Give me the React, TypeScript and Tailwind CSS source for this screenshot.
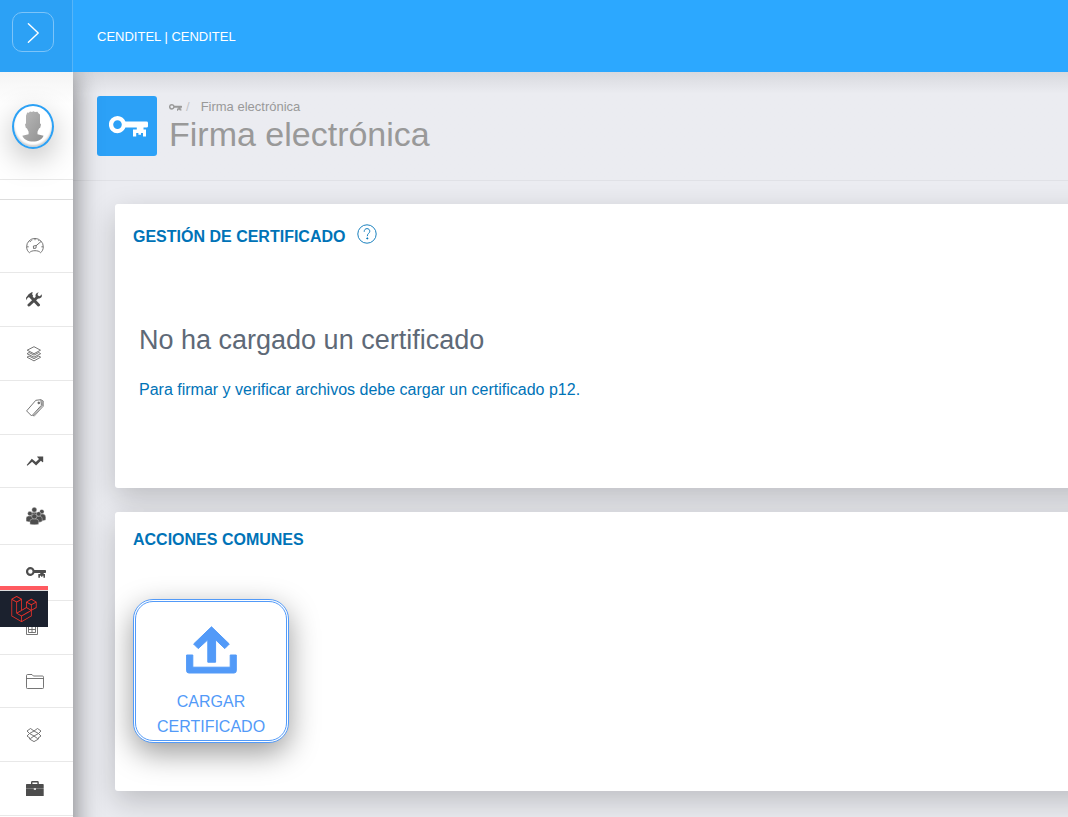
import type { ReactNode } from "react";
import { SiLaravel } from "react-icons/si";

function KeyIcon({ className }: { className: string }) {
  return (
    <svg viewBox="0 0 39 21" className={className} fill="currentColor" aria-hidden="true">
      <path
        fillRule="evenodd"
        d="M8.5 0C12 0 15 2.2 16.5 5.6H37.5Q39 5.6 39 7V10.2Q39 11.6 37.5 11.6H34.5V13.4H37V20.5H34V17H32V18.8H29.4V17H27.2V20.5H24V13.4H27.8V11.6H16.4C15 15 12 17.2 8.5 17.2A8.6 8.6 0 0 1 8.5 0ZM8.5 4.3A4.3 4.3 0 1 0 8.5 12.9A4.3 4.3 0 1 0 8.5 4.3Z"
      />
    </svg>
  );
}

function ThinIcon({ className = "h-[18px] w-[18px]", viewBox = "0 0 18 18", children }: { className?: string; viewBox?: string; children: ReactNode }) {
  return (
    <svg viewBox={viewBox} className={className} fill="none" stroke="#666" strokeWidth=".9" strokeLinejoin="round" aria-hidden="true">
      {children}
    </svg>
  );
}

function GaugeIcon() {
  return (
    <ThinIcon>
      <path d="M3.4 15.7C1.7 14.5.6 12.3.6 9.8A8.3 8.3 0 0 1 17.3 9.8C17.3 12.3 16.2 14.5 14.6 15.7C13.3 14.2 11.3 13.7 9 13.7S4.7 14.2 3.4 15.7Z" />
      <path d="M7.4 9 10.2 8.5 10 11.1 7.5 11.5ZM10 8.8 15 4.5M9 1.5V3.2M3.8 4 4.8 5M1 9.8H2.7M15.4 9.8H17M13 3.1 12.4 4.1M5.4 2.9 5.8 3.8" />
    </ThinIcon>
  );
}

function LayersIcon() {
  return (
    <ThinIcon className="size-4" viewBox="0 0 16 16">
      <path d="M8 .7 14.5 4.2 8 7.7 1.2 4.2Z" />
      <path d="M3 6.5 1 7.7 8 11.1 14.7 7.7 12.8 6.5 8 9.1Z" />
      <path d="M3 10 1 11.2 8 14.9 14.7 11.2 12.8 10 8 12.6Z" />
    </ThinIcon>
  );
}

function TagsIcon() {
  return (
    <ThinIcon>
      <path d="M9.8 1.3 14.9.7 15.4 6.3 5.7 17 .6 11.9Z" />
      <path d="M14.9.7 17.3 2V7.2L8.2 17.2 6.9 16.1M16.2 1.5 16.4 6.8 7.3 16.7" strokeWidth=".7" />
      <circle cx="12.8" cy="3.9" r=".9" fill="#555" />
    </ThinIcon>
  );
}

function LedgerIcon() {
  return (
    <ThinIcon className="h-[14px] w-3" viewBox="0 0 12 14">
      <path d="M.5 1.5H11.5V13.5H.5ZM.5 4.5H11.5" />
      <path d="M2.5 5.5V11.5H9.5V5.5M6 5.5V11.5M2.5 8.5H9.5" />
    </ThinIcon>
  );
}

function FolderIcon() {
  return (
    <ThinIcon className="h-4 w-[18px]" viewBox="0 0 18 16">
      <path d="M.5 14.7V2.7Q.5 1.5 1.6 1.5H6L7.4 3H16.4Q17.5 3 17.5 4.2V14.7Q17.5 15.5 16.7 15.5H1.3Q.5 15.5.5 14.7ZM.5 5.5H17.5" />
    </ThinIcon>
  );
}

function BoxIcon() {
  return (
    <ThinIcon className="size-4" viewBox="0 0 16 16">
      <path d="M4.5 1.5 8 4 11.5 1.5 15 4 12.5 6.5 15 9 11.5 11.5 8 9 4.5 11.5 1 9 3.5 6.5 1 4ZM8 4 3.5 6.5 8 9 12.5 6.5Z" />
      <path d="M3.5 11.2V12L8 14.6 12.5 12V11.2" />
    </ThinIcon>
  );
}

function ToolsIcon() {
  return (
    <svg viewBox="0 0 16 15" className="h-[15px] w-4" fill="none" stroke="currentColor" aria-hidden="true">
      <path d="M5 5 12.5 13" strokeWidth="3" strokeLinecap="round" />
      <path d="M3 13 11.6 5" strokeWidth="3" strokeLinecap="round" />
      <path d="M12.7.3C10 .8 8.9 3.1 9.8 5.1 11.2 7.2 14.5 6.8 15.8 4.4L15.8 2.3 13.8 4.3 11.9 3.7 11.6 1.9Z" fill="currentColor" stroke="none" />
      <path d="M.3 8.3 0 5.8 2.6 2.3 5.6.2 7 .6 6 1.9 7.2 4 4.6 6.3 3 5.1 1.5 6.1Z" fill="currentColor" stroke="none" />
    </svg>
  );
}

function TrendIcon() {
  return (
    <svg viewBox="0 0 18 10" className="h-2.5 w-[18px]" fill="currentColor" aria-hidden="true">
      <path d="M.7 9 5.8 2.7 9.8 6 13 2.9 11.2 1V.4H17.2V6L16.6 6.2 14.9 4.7 10.1 9.4 6.1 5.7 1.4 9.8Z" />
    </svg>
  );
}

function GroupIcon() {
  return (
    <svg viewBox="0 0 20 18" className="h-[18px] w-5" fill="currentColor" stroke="#fff" strokeWidth=".35" aria-hidden="true">
      <circle cx="8.3" cy="2.8" r="2.5" />
      <path d="M4.5 11V7.6Q4.5 5.3 6.8 5.3H10Q12.2 5.3 12.2 7.6V11Z" />
      <circle cx="15.8" cy="4.7" r="2.3" />
      <path d="M12.5 14V9.1Q12.5 7 15 7H17Q19.8 7.3 19.8 10.2V13Q17 14.2 12.5 14Z" />
      <circle cx="3.9" cy="6.6" r="2.3" />
      <path d="M.1 14.3V11.1Q.2 9 2.5 9H5Q7.2 9 7.2 11.1V14.8Q3 15.6.1 14.3Z" />
      <circle cx="12.7" cy="7" r="2.3" />
      <path d="M9.5 15V11.5Q9.5 9.3 11.5 9.3H14Q16.2 9.4 16.2 11.8V14.5Q13 16 9.5 15Z" />
      <circle cx="8.3" cy="9.5" r="2.6" />
      <path d="M3.9 17.2V14.4Q3.9 12.1 6.4 12.1H10.2Q12.7 12.1 12.7 14.4V17.2Q8.5 18.4 3.9 17.2Z" />
    </svg>
  );
}

function BriefcaseIcon() {
  return (
    <svg viewBox="0 0 18 15" className="h-[15px] w-[18px]" fill="currentColor" aria-hidden="true">
      <path fillRule="evenodd" d="M5 3V1.4Q5 0 6.4 0H11.4Q12.8 0 12.8 1.4V3H17Q17.7 3 17.7 3.7V7.7H10V7.2H7.8V7.7H0V3.7Q0 3 .7 3ZM6.4 3H11.4V1.4H6.4Z" />
      <path d="M0 8.1H7.8V8.8H10V8.1H17.7V15H0Z" />
    </svg>
  );
}

function UploadIcon() {
  return (
    <svg viewBox="0 0 52 48" className="h-12 w-[52px]" fill="currentColor" stroke="currentColor" strokeWidth="1" strokeLinejoin="round" aria-hidden="true">
      <path d="M26.5.8 44.3 18 39.8 22.6 30.6 13.8V36.2H22.8V13.8L13.2 22.6 8.6 18Z" />
      <path d="M1.6 29H7.8V41.2H45.2V29H51.3V44.8Q51.3 47 49 47H3.9Q1.6 47 1.6 44.8Z" />
    </svg>
  );
}

function ChevronIcon() {
  return (
    <svg viewBox="0 0 12 20" className="h-5 w-3" fill="none" stroke="currentColor" strokeWidth="1.4" strokeLinecap="round" strokeLinejoin="round" aria-hidden="true">
      <path d="M1.4 .8 11.2 10 1.4 19.2" />
    </svg>
  );
}

function HelpIcon() {
  return (
    <svg viewBox="0 0 20 20" className="size-5" fill="none" stroke="currentColor" strokeWidth=".9" aria-hidden="true">
      <circle cx="10" cy="10" r="9.2" />
      <path d="M7.2 7.4C7.2 5.7 8.4 4.6 10 4.6S12.8 5.7 12.8 7.2C12.8 9.3 10.3 9.3 10.3 11.8" strokeLinecap="round" />
      <circle cx="10.3" cy="14.4" r=".6" fill="currentColor" />
    </svg>
  );
}

function AvatarIcon() {
  return (
    <svg viewBox="0 0 22 31" className="h-[31px] w-[22px]" aria-hidden="true">
      <defs>
        <linearGradient id="face" x1="0" y1="0" x2="1" y2="1">
          <stop offset="0" stopColor="#bababa" />
          <stop offset="1" stopColor="#909090" />
        </linearGradient>
      </defs>
      <path
        fill="url(#face)"
        d="M4 4.8 5.2 1.6 6.8 1.8 8 .6 10 1 11.4.2 13 1 15.4.7 16.7 2.6 18 3.6V12.2L19 13.6 18.2 16.8 17 17.4 15.5 20.8V23.2L21.6 24.8C20.2 28.4 16 30.6 11 30.6S1.8 28.4.3 24.8L6.6 23.2V20.8L5 17.4 3.8 16.8 3 13.5 4 12.2Z"
      />
    </svg>
  );
}

const menu: { label: string; icon: ReactNode; height: string }[] = [
  { label: "Panel de control", icon: <GaugeIcon />, height: "h-[54px]" },
  { label: "Configuración", icon: <ToolsIcon />, height: "h-[54px]" },
  { label: "Registros", icon: <LayersIcon />, height: "h-[54px]" },
  { label: "Presupuesto", icon: <TagsIcon />, height: "h-[54px]" },
  { label: "Finanzas", icon: <TrendIcon />, height: "h-[53px]" },
  { label: "Talento humano", icon: <GroupIcon />, height: "h-[57px]" },
  { label: "Firma electrónica", icon: <KeyIcon className="h-[11px] w-5" />, height: "h-14" },
  { label: "Contabilidad", icon: <LedgerIcon />, height: "h-[54px]" },
  { label: "Archivos", icon: <FolderIcon />, height: "h-[53px]" },
  { label: "Bienes", icon: <BoxIcon />, height: "h-[54px]" },
  { label: "Compras", icon: <BriefcaseIcon />, height: "h-[54px]" },
];

function Sidebar() {
  return (
    <aside className="relative z-20 -mb-12 w-[73px] shrink-0 bg-white shadow-[0_2px_22px_rgba(0,0,0,0.2),0_2px_30px_rgba(0,0,0,0.35)]">
      <div className="flex h-[108px] items-center justify-center border-b border-[#e8e8e8] bg-linear-to-b from-[#f4f4f4] to-white to-30% pt-[2px] pr-[7px]">
        <a
          href="#perfil"
          aria-label="Perfil"
          className="flex h-[45px] w-[42px] items-center justify-center rounded-[50%] border-2 border-[#2ca1f5] bg-white shadow-[0_10px_30px_rgba(0,0,0,0.25),inset_0_-2px_2px_rgba(0,0,0,0.2)]"
        >
          <AvatarIcon />
        </a>
      </div>
      <div className="h-5 border-b border-[#ddd]" />
      <nav className="pt-[19px] text-[#4d4d4d]">
        {menu.map((item) => (
          <a
            key={item.label}
            href="#menu"
            aria-label={item.label}
            className={`flex items-center border-b border-[#e8e8e8] pl-[26px] ${item.height}`}
          >
            {item.icon}
          </a>
        ))}
      </nav>
    </aside>
  );
}

function Card({ title, help, className, children }: { title: string; help?: boolean; className: string; children: ReactNode }) {
  return (
    <section className={`rounded-l-[3px] bg-white px-[18px] shadow-[0_10px_30px_rgba(0,0,0,0.2)] ${className}`}>
      <header className={`flex items-center gap-3 text-[#0073b7] ${help ? "h-[60px]" : "h-[52px]"}`}>
        <h2 className={`text-base font-bold ${help ? "pt-1.5" : "pt-1"}`}>{title}</h2>
        {help && (
          <button type="button" aria-label="Ayuda">
            <HelpIcon />
          </button>
        )}
      </header>
      {children}
    </section>
  );
}

export default function App() {
  return (
    <div className="flex h-screen flex-col overflow-hidden bg-[#ebecf1] font-['Liberation_Sans',Arial,sans-serif]">
      <header className="relative z-30 flex h-[72px] shrink-0 bg-[#2ca8ff] text-white">
        <div className="w-[73px] border-r border-[#56b5f8] bg-[#2ca1f5] pt-3 pl-3">
          <button
            type="button"
            aria-label="Abrir menú"
            className="flex h-10 w-[42px] items-center justify-center rounded-[10px] border border-[#7cc4f9] pt-[2px]"
          >
            <ChevronIcon />
          </button>
        </div>
        <div className="flex items-center pt-[2px] pl-6 text-[13px]">CENDITEL | CENDITEL</div>
      </header>
      <div className="flex min-h-0 grow">
        <Sidebar />
        <main className="min-w-0 grow">
          <div className="flex h-[109px] gap-3 border-b border-[#e0e1e6] bg-linear-to-b from-[#d8d9de] to-[#ebecf1] to-20% pt-6 pl-6">
            <div className="flex size-[60px] items-center justify-center rounded-[3px] bg-[#2ca1f7] pr-px pl-1 text-white">
              <KeyIcon className="h-[21px] w-[39px]" />
            </div>
            <div className="text-[#999]">
              <nav className="flex h-[22px] items-center text-[13px]">
                <KeyIcon className="h-[7px] w-[13px]" />
                <span className="ml-1 text-[#c4c4c8]">/</span>
                <a href="#firma" className="ml-[11px]">Firma electrónica</a>
              </nav>
              <h1 className="text-[34px] leading-8">Firma electrónica</h1>
            </div>
          </div>
          <div className="-mr-8 flex flex-col gap-6 pt-[23px] pl-[42px]">
            <Card title="GESTIÓN DE CERTIFICADO" help className="h-[284px]">
              <div className="px-1.5 pt-14">
                <h3 className="text-[27px] leading-10 text-[#5e6977]">No ha cargado un certificado</h3>
                <p className="pt-[18px] text-base leading-6 text-[#0073b7]">
                  Para firmar y verificar archivos debe cargar un certificado p12.
                </p>
              </div>
            </Card>
            <Card title="ACCIONES COMUNES" className="h-[279px]">
              <button
                type="button"
                className="mt-[35px] flex h-36 w-[156px] flex-col items-center rounded-[20px] border-3 border-double border-[#529af8] bg-white px-4 pt-6 text-base leading-[25px] text-[#529af8] shadow-[0_10px_30px_rgba(0,0,0,0.4)]"
              >
                <UploadIcon />
                <span className="pt-[15px]">CARGAR CERTIFICADO</span>
              </button>
            </Card>
          </div>
        </main>
      </div>
      <a
        href="#debug"
        aria-label="Laravel"
        className="fixed top-[586px] left-0 z-40 block h-[41px] w-12 bg-[#1b212e] text-[#f0322a]"
      >
        <span className="block h-[5px] border-b border-[#ddd] bg-[#ff5a60]" />
        <span className="flex h-9 items-center justify-center">
          <SiLaravel className="size-[26px]" />
        </span>
      </a>
    </div>
  );
}
